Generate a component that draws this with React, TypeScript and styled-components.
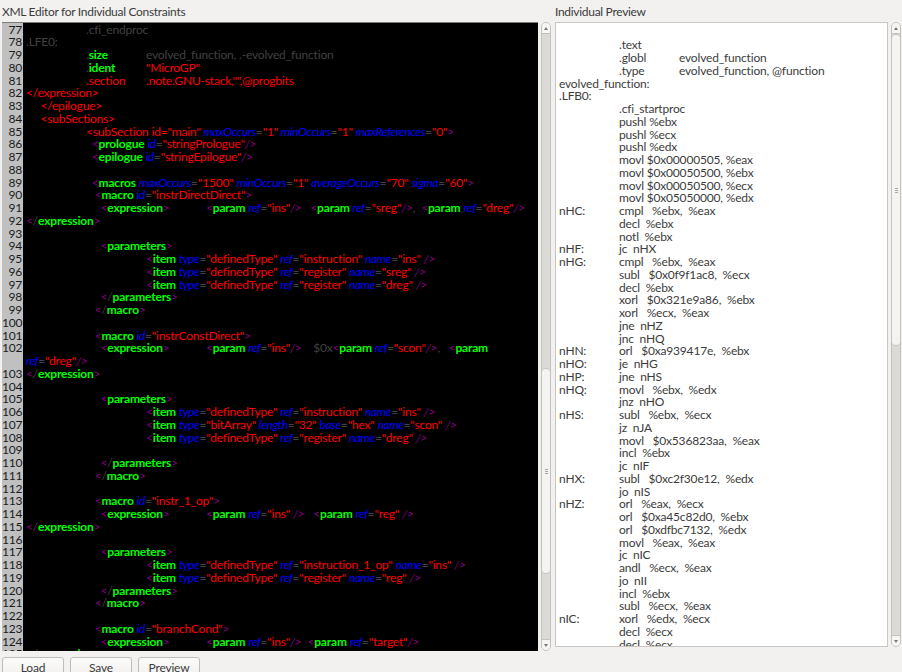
import React from "react";
import styled, { createGlobalStyle } from "styled-components";

const GlobalStyle = createGlobalStyle`
  html, body {
    margin: 0;
    padding: 0;
    height: 100%;
    overflow: hidden;
    background: #f2f1f0;
  }
`;

const Window = styled.div`
  width: 902px;
  height: 672px;
  overflow: hidden;
  display: flex;
  flex-direction: column;
  background: #f2f1f0;
  color: #3c3c3c;
  font-family: "Lato", "Noto Sans", sans-serif;
  font-size: 12px;
  letter-spacing: -0.18px;
`;

const Panels = styled.div`
  display: flex;
  height: 651px;
  flex: none;
`;

const Panel = styled.section<{ $width: number; $left: number; $bottom: number }>`
  width: ${(p) => p.$width}px;
  margin-left: ${(p) => p.$left}px;
  padding-bottom: ${(p) => p.$bottom}px;
  display: flex;
  flex-direction: column;
  flex: none;
  box-sizing: border-box;
`;

const PanelTitle = styled.div`
  height: 22px;
  line-height: 23px;
  flex: none;
  white-space: nowrap;
  letter-spacing: -0.3px;
`;

const PanelBody = styled.div`
  flex: 1;
  min-height: 0;
  display: flex;
`;

const Editor = styled.div`
  width: 536px;
  flex: none;
  background: linear-gradient(to right, #c0c0c0 21px, #000 21px);
  border-top: 1px solid #7c7c7c;
  padding-top: 0.5px;
  overflow: hidden;
  box-sizing: border-box;
`;

const Row = styled.div`
  display: flex;
  line-height: 12.75px;
`;

const LineNo = styled.div`
  width: 21px;
  flex: none;
  box-sizing: border-box;
  color: #1c1c1c;
  text-align: right;
  padding-right: 1px;
`;

const Code = styled.div`
  flex: 1;
  min-width: 0;
  padding-left: 3px;
  white-space: pre;
  tab-size: 60px;
  min-height: 12.75px;
`;

type Kind = "dim" | "red" | "tag" | "attr" | "punct" | "slash";

const Tok = styled.span<{ $kind: Kind }>`
  color: ${(p) =>
    ({ dim: "#404040", red: "#ff0000", tag: "#00ff00", attr: "#0000ff", punct: "#800080", slash: "#800080" })[p.$kind]};
  font-weight: ${(p) => (p.$kind === "tag" ? 700 : 400)};
  font-style: ${(p) => (p.$kind === "attr" || p.$kind === "slash" ? "italic" : "normal")};
  letter-spacing: ${(p) => (p.$kind === "attr" ? "-0.4px" : "inherit")};
`;

const Bar = styled.div`
  width: 10px;
  flex: none;
  display: flex;
  flex-direction: column;
  background: #dcdad7;
  border: 1px solid #c4c2bf;
  border-radius: 5px;
  box-sizing: border-box;
  overflow: hidden;
`;

const BarArrow = styled.div<{ $down?: boolean }>`
  height: 10px;
  flex: none;
  background: #f6f5f4;
  display: flex;
  align-items: center;
  justify-content: center;
  border-${(p) => (p.$down ? "top" : "bottom")}: 1px solid #c4c2bf;
  &::before {
    content: "";
    border-left: 2px solid transparent;
    border-right: 2px solid transparent;
    border-${(p) => (p.$down ? "top" : "bottom")}: 3px solid #777;
  }
`;

const Track = styled.div<{ $before: number }>`
  flex: 1;
  display: flex;
  flex-direction: column;
  padding-top: ${(p) => p.$before}px;
`;

const Thumb = styled.div<{ $height: number }>`
  height: ${(p) => p.$height}px;
  flex: none;
  box-sizing: border-box;
  background: #f4f3f2;
  border-top: 1px solid #c4c2bf;
  border-bottom: 1px solid #c4c2bf;
  border-radius: 5px;
  display: flex;
  flex-direction: column;
  align-items: center;
  justify-content: center;
  gap: 1px;
`;

const Grip = styled.i`
  width: 3px;
  height: 1px;
  background: #a8a6a3;
`;

const Gap = styled.div<{ $width: number }>`
  width: ${(p) => p.$width}px;
  flex: none;
`;

const Preview = styled.pre`
  width: 333px;
  flex: none;
  margin: 0;
  box-sizing: border-box;
  padding: 3.5px 0 0 3px;
  background: #fff;
  border: 1px solid #c8c6c3;
  overflow: hidden;
  font: inherit;
  line-height: 12.75px;
  tab-size: 60px;
  color: #3c3c3c;
`;

const ButtonBar = styled.div`
  display: flex;
  gap: 6px;
  padding: 6px 0 0 2px;
`;

const PushButton = styled.button`
  width: 62px;
  height: 26px;
  flex: none;
  padding: 0 0 5px;
  font: inherit;
  letter-spacing: inherit;
  color: #3c3c3c;
  border: 1px solid #c0bdb8;
  border-radius: 3px;
  background: linear-gradient(#fbfbfa, #efedeb);
`;

const raw: Record<number, [Kind, string][]> = {
  77: [["dim", "\t.cfi_endproc"]],
  78: [["dim", ".LFE0:"]],
  79: [["dim", "\t."], ["tag", "size"], ["dim", "\tevolved_function, .-evolved_function"]],
  80: [["dim", "\t."], ["tag", "ident"], ["red", "\t\"MicroGP\""]],
  81: [["red", "\t.section\t.note.GNU-stack,\"\",@progbits"]],
  82: [["red", "</expression>"]],
  83: [["red", "     </epilogue>"]],
  84: [["red", "     <subSections>"]],
  85: [
    ["red", "\t<subSection id=\"main\" "],
    ["attr", "maxOccurs"], ["dim", "="], ["red", "\"1\" "],
    ["attr", "minOccurs"], ["dim", "="], ["red", "\"1\" "],
    ["attr", "maxReferences"], ["dim", "="], ["red", "\"0\""], ["punct", ">"],
  ],
};

const item = (ref: string, name: string) =>
  `\t\t<item type="definedType" ref="${ref}" name="${name}" />`;

const xml: Record<number, string> = {
  86: `\t  <prologue id="stringPrologue"/>`,
  87: `\t  <epilogue id="stringEpilogue"/>`,
  88: "",
  89: `\t  <macros maxOccurs="1500" minOccurs="1" averageOccurs="70" sigma="60">`,
  90: `\t   <macro id="instrDirectDirect">`,
  91: `\t     <expression>\t<param ref="ins"/>   <param ref="sreg"/>,  <param ref="dreg"/>`,
  92: `</expression>`,
  93: "",
  94: `\t     <parameters>`,
  95: item("instruction", "ins"),
  96: item("register", "sreg"),
  97: item("register", "dreg"),
  98: `\t     </parameters>`,
  99: `\t   </macro>`,
  100: "",
  101: `\t   <macro id="instrConstDirect">`,
  102: `\t     <expression>\t<param ref="ins"/>    $0x<param ref="scon"/>,   <param\nref="dreg"/>`,
  103: `</expression>`,
  104: "",
  105: `\t     <parameters>`,
  106: item("instruction", "ins"),
  107: `\t\t<item type="bitArray" length="32" base="hex" name="scon" />`,
  108: item("register", "dreg"),
  109: "",
  110: `\t     </parameters>`,
  111: `\t   </macro>`,
  112: "",
  113: `\t   <macro id="instr_1_op">`,
  114: `\t     <expression>\t<param ref="ins" />   <param ref="reg" />`,
  115: `</expression>`,
  116: "",
  117: `\t     <parameters>`,
  118: item("instruction_1_op", "ins"),
  119: item("register", "reg"),
  120: `\t     </parameters>`,
  121: `\t   </macro>`,
  122: "",
  123: `\t   <macro id="branchCond">`,
  124: `\t     <expression>\t<param ref="ins"/>  <param ref="target"/>`,
  125: `</expression>`,
};

// rough xml colouring, same order the editor paints it in
function colour(src: string): [Kind, string][] {
  const out: [Kind, string][] = [];
  const re = /(<\/?)(\w+)|(\w+)(=)("[^"]*")|(\/>)|(>)|([^<>=\/]+?(?=<|\/>|>|\w+=|$))/gs;
  let m: RegExpExecArray | null;
  while ((m = re.exec(src))) {
    if (m[1]) {
      out.push(["punct", "<"]);
      if (m[1].length > 1) out.push(["dim", "/"]);
      out.push(["tag", m[2]]);
    } else if (m[3]) {
      out.push(["attr", m[3]], ["dim", "="], ["red", m[5]]);
    } else if (m[6]) {
      out.push(["slash", "/>"]);
    } else if (m[7]) {
      out.push(["punct", ">"]);
    } else if (m[8]) {
      out.push(["dim", m[8]]);
    } else {
      re.lastIndex++;
    }
  }
  return out;
}

const lineNumbers = Array.from({ length: 49 }, (_, i) => 77 + i);

const previewText = `
\t.text
\t.globl\tevolved_function
\t.type\tevolved_function, @function
evolved_function:
.LFB0:
\t.cfi_startproc
\tpushl %ebx
\tpushl %ecx
\tpushl %edx
\tmovl $0x00000505, %eax
\tmovl $0x00050500, %ebx
\tmovl $0x00050500, %ecx
\tmovl $0x05050000, %edx
nHC:\tcmpl   %ebx,  %eax
\tdecl  %ebx
\tnotl  %ebx
nHF:\tjc  nHX
nHG:\tcmpl   %ebx,  %eax
\tsubl   $0x0f9f1ac8,  %ecx
\tdecl  %ebx
\txorl   $0x321e9a86,  %ebx
\txorl   %ecx,  %eax
\tjne  nHZ
\tjnc  nHQ
nHN:\torl   $0xa939417e,  %ebx
nHO:\tje  nHG
nHP:\tjne  nHS
nHQ:\tmovl   %ebx,  %edx
\tjnz  nHO
nHS:\tsubl   %ebx,  %ecx
\tjz  nJA
\tmovl   $0x536823aa,  %eax
\tincl  %ebx
\tjc  nIF
nHX:\tsubl   $0xc2f30e12,  %edx
\tjo  nIS
nHZ:\torl   %eax,  %ecx
\torl   $0xa45c82d0,  %ebx
\torl   $0xdfbc7132,  %edx
\tmovl   %eax,  %eax
\tjc  nIC
\tandl   %ecx,  %eax
\tjo  nII
\tincl  %ebx
\tsubl   %ecx,  %eax
nIC:\txorl   %edx,  %ecx
\tdecl  %ecx
\tdecl  %ecx`;

export default function App() {
  return (
    <Window>
      <GlobalStyle />
      <Panels>
        <Panel $width={550} $left={2} $bottom={0}>
          <PanelTitle>XML Editor for Individual Constraints</PanelTitle>
          <PanelBody>
            <Editor>
              {lineNumbers.map((n) => (
                <Row key={n}>
                  <LineNo>{n}</LineNo>
                  <Code>
                    {(raw[n] ?? colour(xml[n] ?? "")).map(([kind, text], i) => (
                      <Tok key={i} $kind={kind}>
                        {text}
                      </Tok>
                    ))}
                  </Code>
                </Row>
              ))}
            </Editor>
            <Gap $width={3} />
            <Bar>
              <BarArrow />
              <Track $before={334}>
                <Thumb $height={206}>
                  <Grip />
                  <Grip />
                  <Grip />
                </Thumb>
              </Track>
              <BarArrow $down />
            </Bar>
          </PanelBody>
        </Panel>
        <Panel $width={346} $left={3} $bottom={4}>
          <PanelTitle>Individual Preview</PanelTitle>
          <PanelBody>
            <Preview>{previewText}</Preview>
            <Gap $width={3} />
            <Bar>
              <BarArrow />
              <Track $before={0}>
                <Thumb $height={312}>
                  <Grip />
                  <Grip />
                  <Grip />
                </Thumb>
              </Track>
              <BarArrow $down />
            </Bar>
          </PanelBody>
        </Panel>
      </Panels>
      <ButtonBar>
        <PushButton>Load</PushButton>
        <PushButton>Save</PushButton>
        <PushButton>Preview</PushButton>
      </ButtonBar>
    </Window>
  );
}
